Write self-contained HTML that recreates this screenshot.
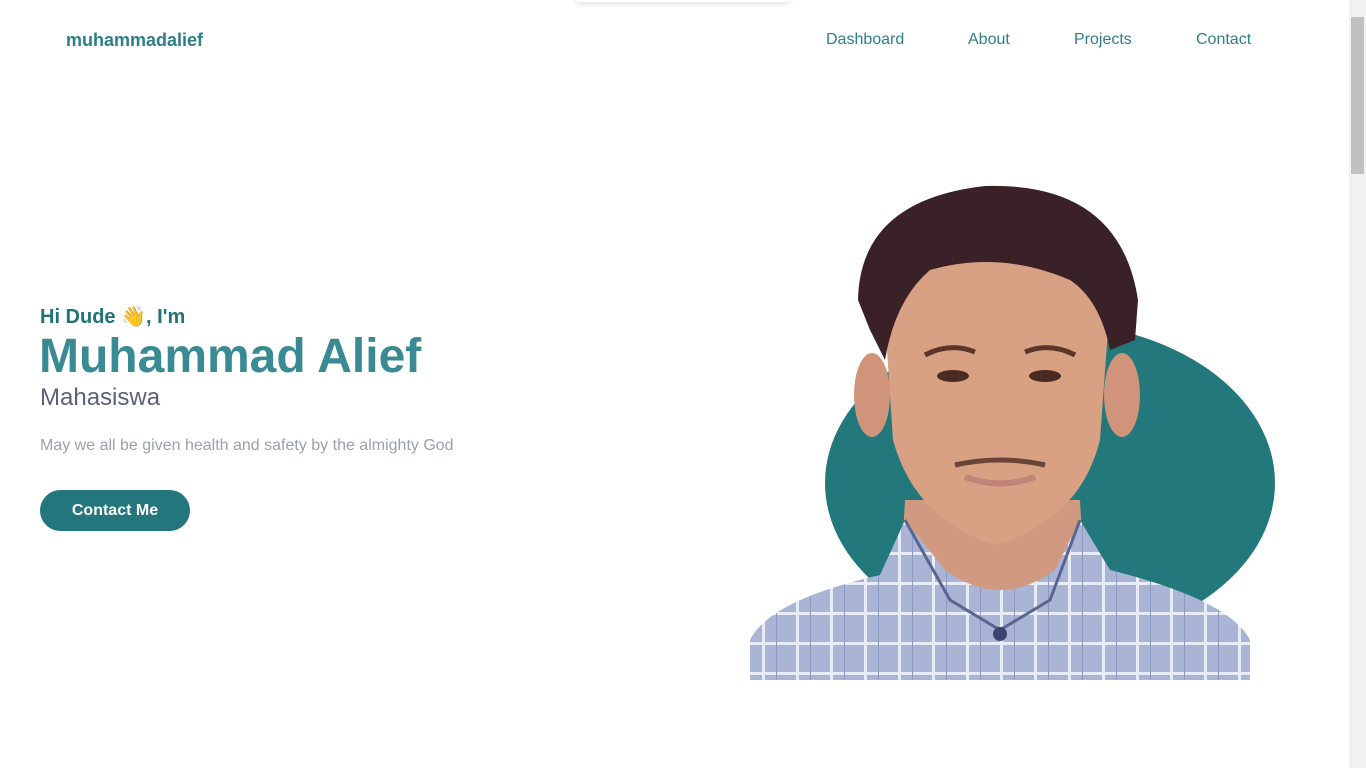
<!DOCTYPE html>
<html><head><meta charset="utf-8">
<style>
html,body{margin:0;padding:0;background:#fff;width:1366px;height:768px;overflow:hidden;font-family:"Liberation Sans",Arial,sans-serif}
.logo{position:absolute;left:66px;top:30px;font-size:18px;font-weight:bold;color:#2b7f86}
.nav a{position:absolute;top:31px;font-size:16px;color:#2f7f86;text-decoration:none}
.hi{position:absolute;left:40px;top:304px;font-size:20px;font-weight:bold;color:#22727a}
.name{position:absolute;left:39px;top:329px;font-size:48px;font-weight:bold;color:#3a8a94}
.role{position:absolute;left:40px;top:384px;font-size:24px;color:#5b6178}
.desc{position:absolute;left:40px;top:437px;font-size:16px;color:#9aa0ad}
.btn{position:absolute;left:40px;top:490px;width:150px;height:41px;border-radius:21px;background:#23777c;color:#fff;font-weight:bold;font-size:16px;text-align:center;line-height:41px}
.sb{position:absolute;left:1349px;top:0;width:17px;height:768px;background:#f1f1f1}
.th{position:absolute;left:1351px;top:17px;width:13px;height:157px;background:#c1c1c1}
.shadow{position:absolute;left:575px;top:-6px;width:215px;height:8px;box-shadow:0 2px 6px rgba(0,0,0,.12);border-radius:4px;background:#fff}
</style></head><body>
<div class="shadow"></div>
<div class="logo">muhammadalief</div>
<div class="nav"><a style="left:826px">Dashboard</a><a style="left:968px">About</a><a style="left:1074px">Projects</a><a style="left:1196px">Contact</a></div>
<div class="hi">Hi Dude <span style="font-family:'DejaVu Sans',sans-serif;color:#f2b530">👋</span>, I'm</div>
<div class="name">Muhammad Alief</div>
<div class="role">Mahasiswa</div>
<div class="desc">May we all be given health and safety by the almighty God</div>
<div class="btn">Contact Me</div>
<svg style="position:absolute;left:0;top:0" width="1366" height="768">
<defs><clipPath id="c"><rect x="750" y="150" width="500" height="530"/></clipPath>
<pattern id="pl" width="34" height="30" patternUnits="userSpaceOnUse"><rect width="34" height="30" fill="#aab4d4"/><rect x="0" y="12" width="34" height="3" fill="#e8ecf6"/><rect x="14" y="0" width="3" height="30" fill="#e8ecf6"/><rect x="28" y="0" width="1" height="30" fill="#8e9ac4"/></pattern></defs>
<ellipse cx="1050" cy="483" rx="225" ry="160" fill="#23787c"/>
<g clip-path="url(#c)">
<path d="M905 500 L1080 500 L1085 590 L900 590 Z" fill="#d19a80"/>
<path d="M750 640 Q770 600 880 575 L905 520 L945 570 Q1000 610 1055 570 L1080 520 L1110 570 Q1230 600 1250 640 L1250 680 L750 680 Z" fill="url(#pl)"/>
<path d="M905 520 L950 600 L1000 630 L1050 600 L1080 520" fill="none" stroke="#5a6590" stroke-width="3"/>
<circle cx="1000" cy="634" r="7" fill="#3c4470"/>
<ellipse cx="872" cy="395" rx="18" ry="42" fill="#cf9479"/>
<ellipse cx="1122" cy="395" rx="18" ry="42" fill="#cf9479"/>
<path d="M885 320 Q885 260 995 255 Q1110 260 1108 330 L1100 440 Q1080 520 995 545 Q915 520 893 440 Z" fill="#d9a184"/>
<path d="M858 300 Q860 200 985 186 Q1120 182 1138 300 L1135 340 L1110 350 Q1100 300 1070 280 Q1000 250 930 270 Q895 300 885 360 L870 330 Z" fill="#3a2128"/>
<ellipse cx="953" cy="376" rx="16" ry="6" fill="#4b2a22"/>
<ellipse cx="1045" cy="376" rx="16" ry="6" fill="#4b2a22"/>
<path d="M925 355 Q950 342 975 352 M1025 352 Q1050 342 1075 355" stroke="#5a3528" stroke-width="5" fill="none"/>
<path d="M955 465 Q1000 455 1045 465" stroke="#6a4438" stroke-width="5" fill="none"/>
<path d="M965 477 Q1000 490 1035 477" stroke="#c08378" stroke-width="6" fill="none"/>
</g>
</svg>
<div class="sb"></div><div class="th"></div>
</body></html>
